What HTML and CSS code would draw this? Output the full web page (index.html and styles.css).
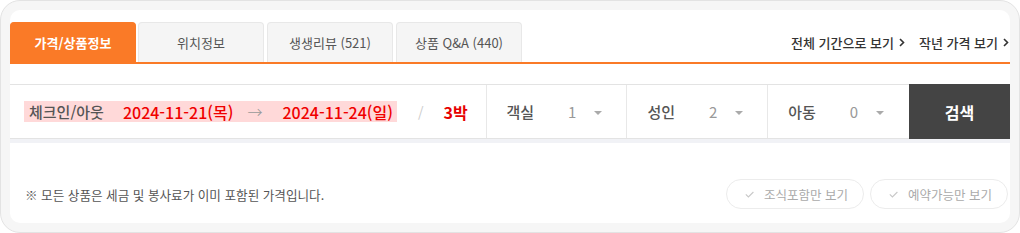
FILE: index.html
```html
<!DOCTYPE html>
<html lang="ko">
<head>
<meta charset="utf-8">
<link rel="stylesheet" href="styles.css">
</head>
<body>
<div class="frame">
  <div class="panel">
    <div class="tabbar">
      <div class="tab active">가격/상품정보</div>
      <div class="tab">위치정보</div>
      <div class="tab">생생리뷰 (521)</div>
      <div class="tab">상품 Q&amp;A (440)</div>
      <div class="links">
        <a class="link">전체 기간으로 보기 <svg class="chev" width="6" height="9" viewBox="0 0 6 9"><path d="M1 1l3.5 3.5L1 8" fill="none" stroke="#333" stroke-width="1.6"/></svg></a>
        <a class="link">작년 가격 보기 <svg class="chev" width="6" height="9" viewBox="0 0 6 9"><path d="M1 1l3.5 3.5L1 8" fill="none" stroke="#333" stroke-width="1.6"/></svg></a>
      </div>
    </div>

    <div class="search">
      <div class="dates">
        <div class="hl">
          <span class="lbl">체크인/아웃</span>
          <span class="date">2024-11-21(목)</span>
          <span class="arrow">→</span>
          <span class="date">2024-11-24(일)</span>
        </div>
        <span class="slash">/</span>
        <span class="nights">3박</span>
      </div>
      <div class="sel">
        <span class="lbl">객실</span>
        <span class="num">1</span>
        <span class="caret"></span>
      </div>
      <div class="sel">
        <span class="lbl">성인</span>
        <span class="num">2</span>
        <span class="caret"></span>
      </div>
      <div class="sel last">
        <span class="lbl">아동</span>
        <span class="num">0</span>
        <span class="caret"></span>
      </div>
      <div class="btn-search">검색</div>
    </div>
    <div class="band"></div>

    <div class="foot">
      <p class="note">※ 모든 상품은 세금 및 봉사료가 이미 포함된 가격입니다.</p>
      <div class="filters">
        <div class="pill"><svg width="9" height="7" viewBox="0 0 9 7"><path d="M0.8 3.4l2.6 2.6L8.4 1" fill="none" stroke="#c8c8c8" stroke-width="1.1"/></svg>조식포함만 보기</div>
        <div class="pill"><svg width="9" height="7" viewBox="0 0 9 7"><path d="M0.8 3.4l2.6 2.6L8.4 1" fill="none" stroke="#c8c8c8" stroke-width="1.1"/></svg>예약가능만 보기</div>
      </div>
    </div>
  </div>
</div>
</body>
</html>
```

FILE: styles.css
```css
* { box-sizing: border-box; }
html, body { margin: 0; padding: 0; background: #fff; }
body {
  font-family: "Noto Sans CJK KR", "Noto Sans", sans-serif;
  color: #333;
}
.frame {
  width: 1020px;
  height: 233px;
  border: 1px solid #e3e3e3;
  border-radius: 20px;
  background: #f6f6f6;
  padding: 9px;
}
.panel {
  background: #fff;
  border-radius: 10px;
  height: 213px;
  padding-top: 12px;
  display: flex;
  flex-direction: column;
}
.tabbar {
  display: flex;
  align-items: flex-end;
  border-bottom: 2px solid #fa7a27;
  height: 42px;
}
.tab {
  width: 126px;
  height: 40px;
  margin-right: 3px;
  display: flex;
  align-items: center;
  justify-content: center;
  background: #f5f5f5;
  border: 1px solid #e8e8e8;
  border-bottom: none;
  border-radius: 4px 4px 0 0;
  font-size: 13px;
  color: #555;
}
.tab.active {
  background: #fa7a27;
  border-color: #fa7a27;
  color: #fff;
  font-weight: 700;
  margin-right: 2px;
}
.links {
  margin-left: auto;
  align-self: center;
  display: flex;
  gap: 14px;
  padding-right: 1px;
  margin-top: 0;
}
.link {
  font-size: 13px;
  font-weight: 500;
  color: #333;
  display: flex;
  align-items: center;
  gap: 5px;
}
.search {
  margin-top: 20px;
  height: 55px;
  border-top: 1px solid #e3e3e3;
  border-bottom: 1px solid #e3e3e3;
  display: flex;
  align-items: stretch;
}
.dates {
  display: flex;
  align-items: center;
  padding-left: 14px;
  width: 477px;
  border-right: 1px solid #e8e8e8;
}
.hl {
  background: #ffd9d9;
  height: 21px;
  display: flex;
  align-items: center;
  padding: 0 4px 0 5px;
  font-size: 16px;
}
.lbl { color: #555; font-size: 15px; font-weight: 500; }
.date { color: #f00000; font-weight: 500; font-size: 16px; }
.hl .lbl { margin-right: 19px; }
.arrow { color: #999; margin: 0 20px 0 14px; font-weight: 300; font-size: 15px; }
.slash { color: #ccc; margin-left: 21px; font-size: 14px; }
.nights { color: #e60000; font-weight: 700; font-size: 16px; margin-left: 20px; }
.sel {
  display: flex;
  align-items: center;
  width: 141px;
  padding-left: 20px;
  border-right: 1px solid #e8e8e8;
}
.sel.last { border-right: none; }
.num { color: #999; font-size: 15px; margin-left: 34px; }
.caret {
  width: 0; height: 0;
  border-left: 4px solid transparent;
  border-right: 4px solid transparent;
  border-top: 4px solid #aaa;
  margin-left: 18px;
  margin-top: 2px;
}
.btn-search {
  margin-left: auto;
  width: 101px;
  margin-top: -1px;
  margin-bottom: -1px;
  background: #444;
  color: #fff;
  font-weight: 700;
  font-size: 16px;
  display: flex;
  align-items: center;
  justify-content: center;
}
.band {
  height: 4px;
  background: #f1f2f6;
}
.foot {
  margin-top: 36px;
  display: flex;
  align-items: center;
  padding: 0 2px 0 15px;
}
.note {
  margin: 0;
  font-size: 12.6px;
  color: #555;
}
.filters {
  margin-left: auto;
  display: flex;
  gap: 6px;
}
.pill {
  height: 30px;
  padding: 0 15px 0 18px;
  border: 1px solid #ececec;
  border-radius: 15px;
  display: flex;
  align-items: center;
  gap: 10px;
  font-size: 12.5px;
  color: #aaa;
}
```
